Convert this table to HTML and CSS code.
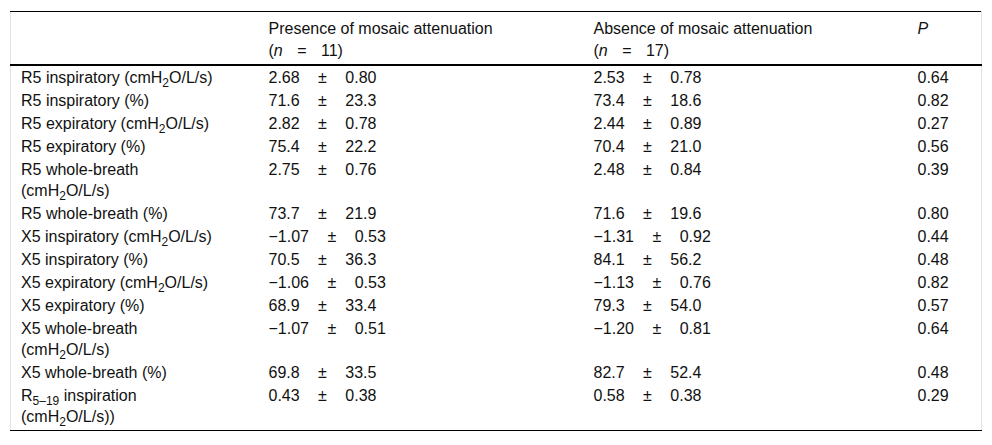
FILE: index.html
```html
<!DOCTYPE html>
<html>
<head>
<meta charset="utf-8">
<link rel="stylesheet" href="styles.css">
</head>
<body>
<table class="tbl">
  <colgroup>
    <col class="c1"><col class="c2"><col class="c3"><col class="c4">
  </colgroup>
  <thead>
    <tr>
      <th></th>
      <th>Presence of mosaic attenuation<br><span class="wn">(<i>n</i> = 11)</span></th>
      <th>Absence of mosaic attenuation<br><span class="wn">(<i>n</i> = 17)</span></th>
      <th><i>P</i></th>
    </tr>
  </thead>
  <tbody>
    <tr><td>R5 inspiratory (cmH<sub>2</sub>O/L/s)</td><td class="ws">2.68 ± 0.80</td><td class="ws">2.53 ± 0.78</td><td>0.64</td></tr>
    <tr><td>R5 inspiratory (%)</td><td class="ws">71.6 ± 23.3</td><td class="ws">73.4 ± 18.6</td><td>0.82</td></tr>
    <tr><td>R5 expiratory (cmH<sub>2</sub>O/L/s)</td><td class="ws">2.82 ± 0.78</td><td class="ws">2.44 ± 0.89</td><td>0.27</td></tr>
    <tr><td>R5 expiratory (%)</td><td class="ws">75.4 ± 22.2</td><td class="ws">70.4 ± 21.0</td><td>0.56</td></tr>
    <tr><td>R5 whole-breath<br>(cmH<sub>2</sub>O/L/s)</td><td class="ws">2.75 ± 0.76</td><td class="ws">2.48 ± 0.84</td><td>0.39</td></tr>
    <tr><td>R5 whole-breath (%)</td><td class="ws">73.7 ± 21.9</td><td class="ws">71.6 ± 19.6</td><td>0.80</td></tr>
    <tr><td>X5 inspiratory (cmH<sub>2</sub>O/L/s)</td><td class="ws">−1.07 ± 0.53</td><td class="ws">−1.31 ± 0.92</td><td>0.44</td></tr>
    <tr><td>X5 inspiratory (%)</td><td class="ws">70.5 ± 36.3</td><td class="ws">84.1 ± 56.2</td><td>0.48</td></tr>
    <tr><td>X5 expiratory (cmH<sub>2</sub>O/L/s)</td><td class="ws">−1.06 ± 0.53</td><td class="ws">−1.13 ± 0.76</td><td>0.82</td></tr>
    <tr><td>X5 expiratory (%)</td><td class="ws">68.9 ± 33.4</td><td class="ws">79.3 ± 54.0</td><td>0.57</td></tr>
    <tr><td>X5 whole-breath<br>(cmH<sub>2</sub>O/L/s)</td><td class="ws">−1.07 ± 0.51</td><td class="ws">−1.20 ± 0.81</td><td>0.64</td></tr>
    <tr><td>X5 whole-breath (%)</td><td class="ws">69.8 ± 33.5</td><td class="ws">82.7 ± 52.4</td><td>0.48</td></tr>
    <tr class="last"><td>R<sub>5–19</sub> inspiration<br>(cmH<sub>2</sub>O/L/s))</td><td class="ws">0.43 ± 0.38</td><td class="ws">0.58 ± 0.38</td><td>0.29</td></tr>
  </tbody>
</table>
</body>
</html>
```
FILE: styles.css
```css
html, body {
  margin: 0;
  padding: 0;
  background: #fff;
}
body {
  font-family: "Liberation Sans", Arial, sans-serif;
  font-size: 16px;
  color: #111;
}
.tbl {
  margin: 11px 0 0 10px;
  width: 972px;
  border-collapse: collapse;
  table-layout: fixed;
  border-top: 1px solid #000;
  border-bottom: 1px solid #000;
  border-left: 1px solid #e2e2e2;
  border-right: 1px solid #e2e2e2;
}
.c1 { width: 248px; }
.c2 { width: 325px; }
.c3 { width: 324px; }
.c4 { width: 74px; }
.tbl th {
  font-weight: normal;
  text-align: left;
  vertical-align: top;
  line-height: 22px;
  padding: 6px 10px 2px 10px;
  border-bottom: 2px solid #000;
}
.tbl td {
  vertical-align: top;
  line-height: 21px;
  padding: 1px 10px 1px 10px;
}
.tbl .last td {
  padding-bottom: 3px;
}
.ws {
  word-spacing: 14px;
  white-space: nowrap;
}
.wn {
  word-spacing: 10px;
  white-space: nowrap;
}
sub {
  font-size: 12px;
  line-height: 0;
  vertical-align: -4px;
}
```
